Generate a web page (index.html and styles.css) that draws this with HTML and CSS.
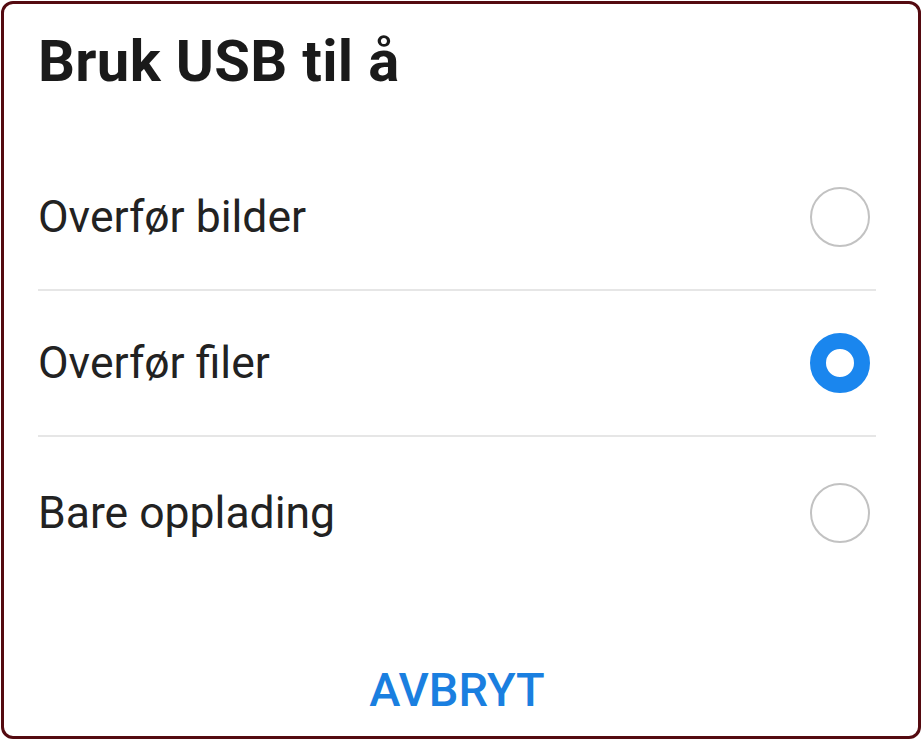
FILE: index.html
```html
<!DOCTYPE html>
<html lang="no">
<head>
<meta charset="utf-8">
<title>Bruk USB til å</title>
<link rel="stylesheet" href="styles.css">
</head>
<body>
<div class="dialog">
  <h1 class="title">Bruk USB til å</h1>
  <ul class="options">
    <li class="option">
      <span class="label">Overfør bilder</span>
      <span class="radio"></span>
    </li>
    <li class="option">
      <span class="label">Overfør filer</span>
      <span class="radio checked"></span>
    </li>
    <li class="option last">
      <span class="label">Bare opplading</span>
      <span class="radio"></span>
    </li>
  </ul>
  <div class="actions">
    <button class="cancel">AVBRYT</button>
  </div>
</div>
</body>
</html>
```
FILE: styles.css
```css
html, body {
  margin: 0;
  padding: 0;
  background: #ffffff;
}
body {
  padding: 1px;
  font-family: Roboto, "Noto Sans", sans-serif;
  color: #1f1f1f;
}
.dialog {
  box-sizing: border-box;
  width: 920px;
  height: 738px;
  border: 3px solid #540a10;
  border-radius: 12px;
  background: #ffffff;
  display: flex;
  flex-direction: column;
  padding: 0 42px 0 34px;
}
.title {
  margin: 0;
  height: 141px;
  box-sizing: border-box;
  padding-top: 25px;
  font-size: 58px;
  font-weight: 700;
  line-height: 64px;
  letter-spacing: 0.3px;
  color: #1a1a1a;
}
.options {
  list-style: none;
  margin: 0;
  padding: 0;
}
.option {
  height: 144px;
  display: flex;
  align-items: center;
  justify-content: space-between;
  border-bottom: 2px solid #e6e6e6;
}
.option.last {
  border-bottom: none;
  height: 152px;
}
.label {
  font-size: 44.5px;
  line-height: 52px;
  color: #222222;
}
.radio {
  box-sizing: border-box;
  width: 60px;
  height: 60px;
  border-radius: 50%;
  border: 2.5px solid #c2c2c2;
  margin-right: 6px;
}
.radio.checked {
  border: 16px solid #1a86ee;
}
.actions {
  flex: 1;
  display: flex;
  align-items: center;
  justify-content: center;
  padding-top: 54px;
}
.cancel {
  background: none;
  border: none;
  padding: 0;
  font-family: Roboto, "Noto Sans", sans-serif;
  font-size: 47px;
  font-weight: 500;
  color: #1a7fe0;
}
```
